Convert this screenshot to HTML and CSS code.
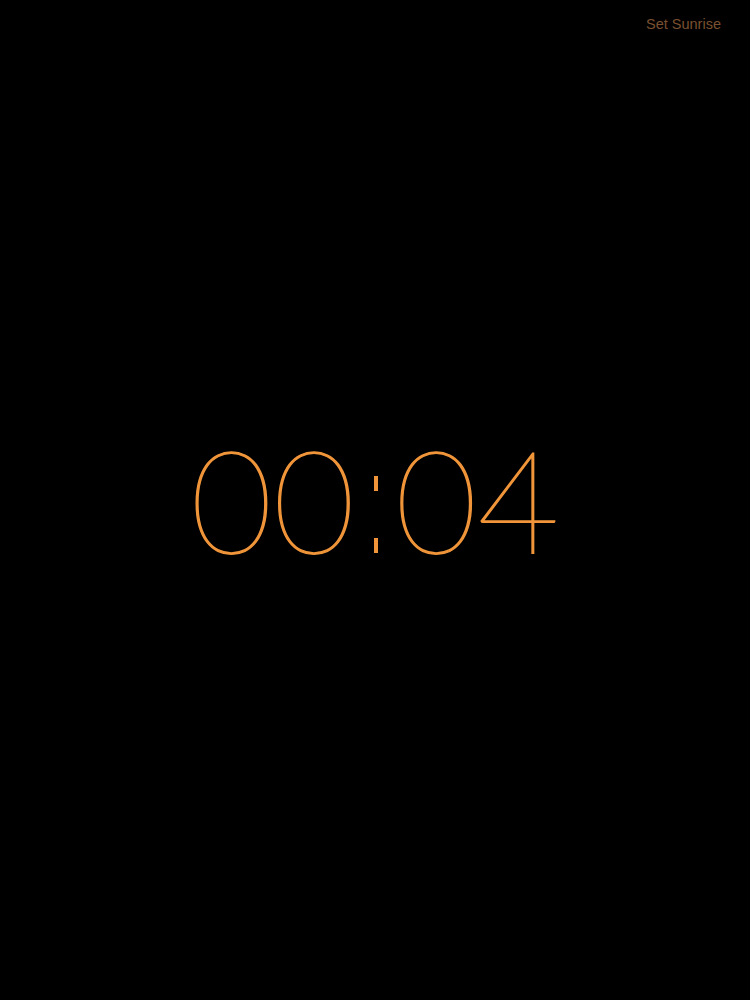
FILE: index.html
```html
<!DOCTYPE html>
<html>
<head>
<meta charset="utf-8">
<title>Sunrise</title>
<link rel="stylesheet" href="styles.css">
</head>
<body>
<div class="app">
  <header class="topbar">
    <span class="set-link">Set Sunrise</span>
  </header>
  <main class="clock">
    <div class="time"><span class="digits">00</span><span class="colon">:</span><span class="digits">04</span></div>
  </main>
</div>
</body>
</html>
```
FILE: styles.css
```css
html, body {
  margin: 0;
  padding: 0;
  background: #000;
}
.app {
  width: 750px;
  height: 1000px;
  display: flex;
  flex-direction: column;
  font-family: "Liberation Sans", Arial, sans-serif;
}
.topbar {
  display: flex;
  justify-content: flex-end;
  padding: 16px 29px 0 0;
  height: 30px;
}
.set-link {
  font-size: 14.5px;
  line-height: 17px;
  color: #7a5030;
}
.clock {
  flex: 1;
  display: flex;
  align-items: center;
  justify-content: center;
  padding-bottom: 51px;
}
.time {
  font-family: Lato, Inter, sans-serif;
  font-weight: 100;
  font-size: 142px;
  line-height: 1;
  color: #f0953a;
  -webkit-text-stroke: 1.4px #f0953a;
  display: flex;
  align-items: baseline;
}
.colon {
  position: relative;
  display: inline-block;
  width: 40px;
  color: transparent;
  -webkit-text-stroke: 0;
}
.colon::before,
.colon::after {
  content: "";
  position: absolute;
  left: 19px;
  width: 4px;
  height: 15px;
  background: #f0953a;
}
.colon::before {
  bottom: 78px;
}
.colon::after {
  bottom: 16px;
}
```
